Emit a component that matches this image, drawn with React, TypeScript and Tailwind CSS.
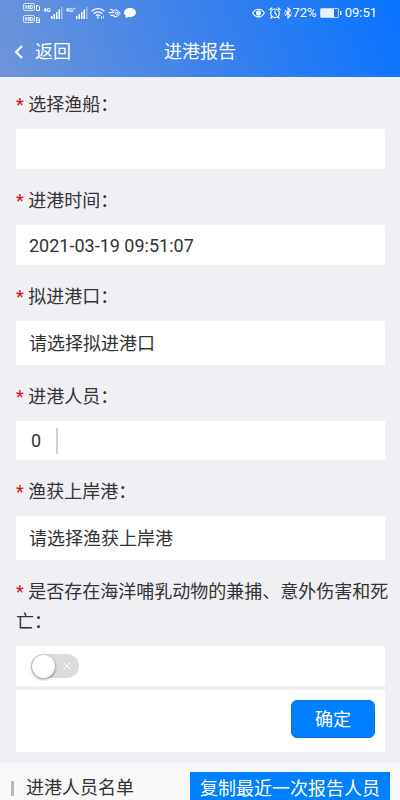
import React, { useState } from 'react';

interface FieldProps {
    id: string;
    label: string;
    children: React.ReactNode;
}

const Field = ({ id, label, children }: FieldProps) => (
    <div>
        <label htmlFor={id} className="-mr-2 block pb-[9px] leading-[30px]">
            <span className="text-[#d0131c]">*</span>
            {' '}
            {label}
        </label>
        {children}
    </div>
);

const SignalBars = () => (
    <svg width="12" height="12" viewBox="0 0 12 12" fill="currentColor" aria-hidden="true">
        <rect x="0" y="9" width="1.5" height="3" />
        <rect x="2.5" y="7" width="1.5" height="5" />
        <rect x="5" y="5" width="1.5" height="7" />
        <rect x="7.5" y="2.5" width="1.5" height="9.5" />
        <rect x="10" y="0" width="1.5" height="12" opacity="0.45" />
    </svg>
);

const HdBadge = ({ sim }: { sim: number }) => (
    <div className="flex items-end gap-px">
        <span className="flex h-2 w-3 items-center justify-center rounded-[2px] border border-white/75 text-[6px] leading-none font-bold">HD</span>
        <svg width="4" height="6" viewBox="0 0 4 6" fill="none" stroke="currentColor" strokeWidth="1" aria-hidden="true">
            <path d={sim === 1 ? 'M.5.5H2.2L3.5 2V5.5H.5Z' : 'M.5.5H2.2L3.5 2V5.5H.5ZM.5 3.2H3.5'} />
        </svg>
    </div>
);

const StatusBar = () => (
    <div className="flex h-[26px] items-center justify-between px-[23px] text-[13px]">
        <div className="flex items-center">
            <div className="flex flex-col gap-1">
                <HdBadge sim={1} />
                <HdBadge sim={2} />
            </div>
            <span className="ml-[3px] self-start pt-1 text-[6px] leading-none font-bold">4G</span>
            <SignalBars />
            <span className="ml-[3px] self-start pt-1 text-[6px] leading-none font-bold">4G⁺</span>
            <SignalBars />
            <svg className="ml-[3px]" width="14" height="12" viewBox="0 0 14 12" fill="none" stroke="currentColor" strokeWidth="1.4" aria-hidden="true">
                <path d="M.7 4.3C4.3.7 9.7.7 13.3 4.3" />
                <path d="M2.8 6.7C5.2 4.3 8.8 4.3 11.2 6.7" />
                <path d="M4.9 8.8C6.1 7.6 7.9 7.6 9.1 8.8" />
                <circle cx="7" cy="10.6" r="1" fill="currentColor" stroke="none" />
                <path d="M10.5 9V12M12.5 8.5V11.5" strokeWidth="0.7" />
            </svg>
            <svg className="ml-[3px]" width="13" height="12" viewBox="0 0 13 12" fill="none" stroke="currentColor" strokeWidth="1" strokeLinecap="round" strokeLinejoin="round" aria-hidden="true">
                <path d="M2.8 2.2 5.5 3.6C7.2 2.4 9 2.7 10.2 3.9L12.3 6.2 9.8 9C8 10.3 5.8 9.8 4 8.2" />
                <path d="M2.8 2.2 6 5.4M.8 5.6H5.5M2.4 8.2H6.2" />
                <circle cx="8.8" cy="6.2" r="1.3" />
            </svg>
            <svg className="ml-[3px]" width="12" height="12" viewBox="0 0 12 12" fill="currentColor" aria-hidden="true">
                <path d="M6 1C9.3 1 12 3 12 5.6S9.3 10.2 6 10.2C5.3 10.2 4.6 10.1 4 9.9L1.3 11.3 1.9 8.8C.7 8 0 6.9 0 5.6 0 3 2.7 1 6 1Z" />
            </svg>
        </div>
        <div className="flex items-center">
            <svg width="13" height="12" viewBox="0 0 13 12" fill="none" stroke="currentColor" strokeWidth="1.1" aria-hidden="true">
                <path d="M.7 6C3.2.9 9.8.9 12.3 6 9.8 11.1 3.2 11.1.7 6Z" />
                <circle cx="6.5" cy="6" r="2" fill="currentColor" />
            </svg>
            <svg className="ml-1" width="12" height="12" viewBox="0 0 12 12" fill="none" stroke="currentColor" strokeWidth="1.2" strokeLinecap="round" aria-hidden="true">
                <circle cx="6" cy="6.3" r="4.3" />
                <path d="M6 4V6.5L7.5 7.8M.8 2.7 2.8 1M11.2 2.7 9.2 1M2.8 10 1.8 11.2M9.2 10 10.2 11.2" />
            </svg>
            <svg className="ml-[3px]" width="8" height="12" viewBox="0 0 8 12" fill="none" stroke="currentColor" strokeWidth="1.1" aria-hidden="true">
                <path d="M1 3.3 6.5 8.5 4 11V1L6.5 3.5 1 8.7" />
                <path d="M0 6H1.2M6.8 6H8" />
            </svg>
            <span>72%</span>
            <svg className="ml-[3px]" width="22" height="10" viewBox="0 0 22 10" fill="none" aria-hidden="true">
                <rect x="0.5" y="0.5" width="18" height="9" rx="0.8" stroke="currentColor" opacity="0.7" />
                <rect x="1" y="1" width="13" height="8" fill="currentColor" opacity="0.9" />
                <rect x="20" y="3" width="1.5" height="4" fill="currentColor" />
            </svg>
            <time className="ml-[3px]">09:51</time>
        </div>
    </div>
);

const boxClass = 'block w-full rounded-none bg-white px-[13px] outline-none';

export default function App() {
    const [boat, setBoat] = useState('');
    const [time, setTime] = useState('2021-03-19 09:51:07');
    const [people, setPeople] = useState('0');
    const [bycatch, setBycatch] = useState(false);

    return (
        <div className="flex h-screen flex-col overflow-hidden bg-[#efeff4] font-[Roboto,'Noto_Sans_CJK_SC',sans-serif] text-[18px] text-[#333]">
            <header className="shrink-0 bg-linear-[70deg] from-[#6f95d9] via-[#3c82eb] to-[#0873ff] text-white">
                <StatusBar />
                <div className="grid h-[51px] grid-cols-3 items-center px-3.5">
                    <button type="button" className="flex items-center gap-3 justify-self-start">
                        <svg width="9" height="14" viewBox="0 0 9 14" fill="none" stroke="currentColor" strokeWidth="2" aria-hidden="true">
                            <path d="M8 1 2 7 8 13" />
                        </svg>
                        返回
                    </button>
                    <h1 className="justify-self-center">进港报告</h1>
                </div>
            </header>

            <form className="flex shrink-0 flex-col gap-[17px] pt-[13px] pr-[15px] pb-[11px] pl-4" onSubmit={(e) => e.preventDefault()}>
                <Field id="boat" label="选择渔船：">
                    <input id="boat" className={`${boxClass} h-10`} value={boat} onChange={(e) => setBoat(e.target.value)} />
                </Field>
                <Field id="time" label="进港时间：">
                    <input id="time" className={`${boxClass} h-10`} value={time} onChange={(e) => setTime(e.target.value)} />
                </Field>
                <Field id="port" label="拟进港口：">
                    <select id="port" className={`${boxClass} h-11 appearance-none`}>
                        <option>请选择拟进港口</option>
                    </select>
                </Field>
                <Field id="people" label="进港人员：">
                    <div className="flex h-[39px] items-center bg-white px-[15px]">
                        <input
                            id="people"
                            className="h-[26px] w-[27px] border-r-2 border-[#d0d0d0] outline-none"
                            value={people}
                            onChange={(e) => setPeople(e.target.value)}
                        />
                    </div>
                </Field>
                <Field id="landing" label="渔获上岸港：">
                    <select id="landing" className={`${boxClass} h-11 appearance-none`}>
                        <option>请选择渔获上岸港</option>
                    </select>
                </Field>
                <div>
                    <Field id="bycatch" label="是否存在海洋哺乳动物的兼捕、意外伤害和死亡：">
                        <div className="flex h-10 items-center bg-white px-[15px]">
                            <span className="relative flex h-6 w-12 items-center rounded-full bg-[#dcdcdc] has-checked:bg-[#007fff]">
                                <input
                                    id="bycatch"
                                    type="checkbox"
                                    role="switch"
                                    className="peer absolute inset-0 appearance-none rounded-full"
                                    checked={bycatch}
                                    onChange={(e) => setBycatch(e.target.checked)}
                                />
                                <span className="pointer-events-none ml-px size-[23px] rounded-full bg-white shadow-[0_1px_3px_rgba(0,0,0,0.5)] peer-checked:ml-6" />
                                {!bycatch && (
                                    <svg className="pointer-events-none ml-2" width="8" height="8" viewBox="0 0 8 8" fill="none" stroke="#fff" aria-hidden="true">
                                        <path d="M.5.5 7.5 7.5M7.5.5.5 7.5" />
                                    </svg>
                                )}
                            </span>
                        </div>
                    </Field>
                    <div className="mt-1 flex h-[62px] items-center justify-end bg-white px-2.5 pb-1">
                        <button type="submit" className="h-[38px] w-[84px] rounded-md border border-[#0b70d8] bg-[#007fff] text-white">确定</button>
                    </div>
                </div>
            </form>

            <section className="flex flex-1 items-start justify-between bg-[#f8f8f9] pt-[9px] pr-2.5 pl-[11px]">
                <h2 className="flex items-center gap-3 leading-8">
                    <span className="h-[15px] w-[3px] bg-[#b9b9b9]" />
                    进港人员名单
                </h2>
                <button type="button" className="h-8 bg-[#007fff] px-2.5 text-white">复制最近一次报告人员</button>
            </section>
        </div>
    );
}
